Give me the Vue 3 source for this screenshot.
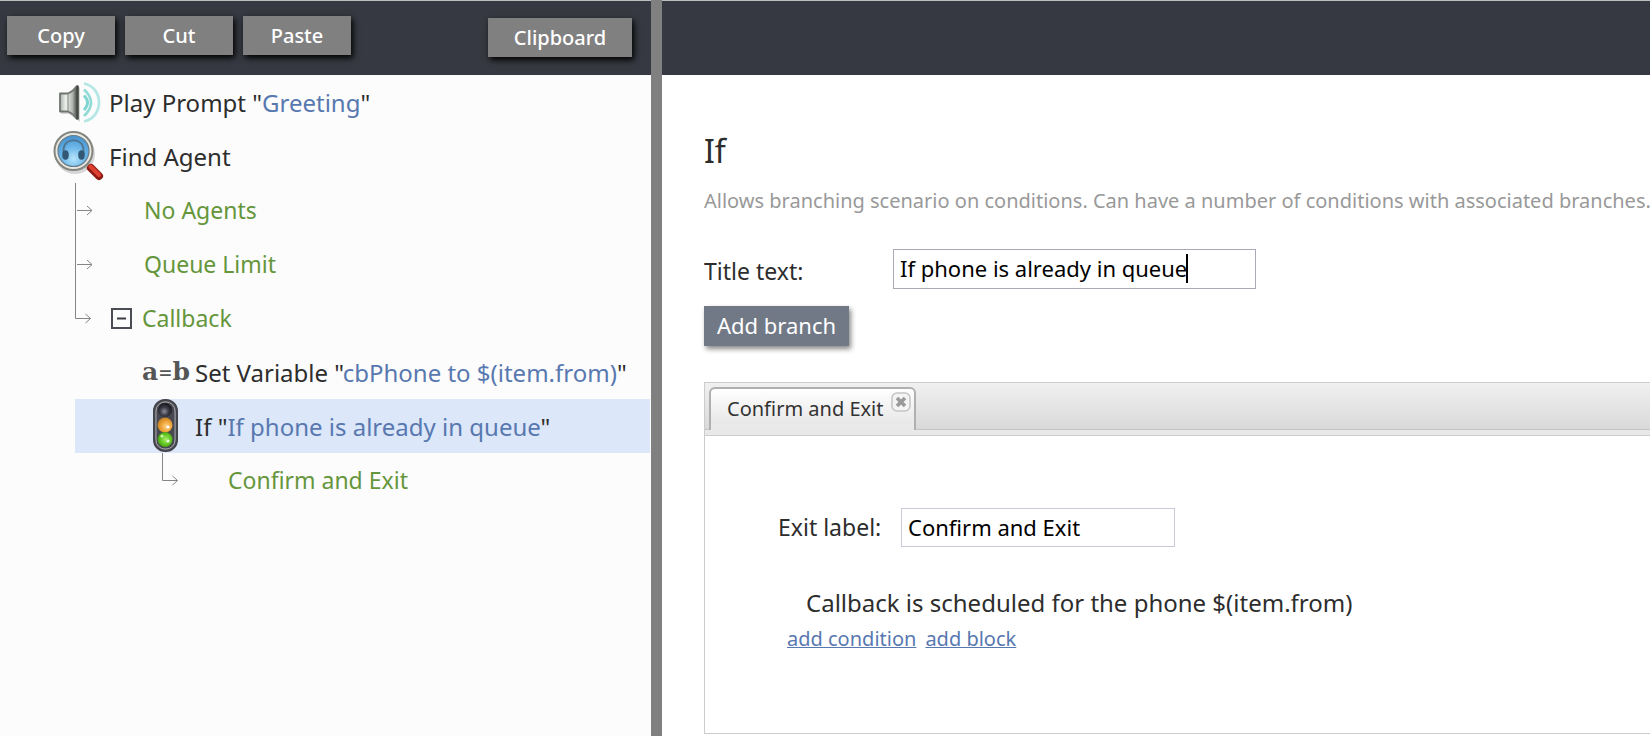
<script setup>
import { ref } from 'vue'

const title = ref('If phone is already in queue')
const exitLabel = ref('Confirm and Exit')
</script>

<template>
  <div class="editor">
    <section class="side">
      <header class="bar">
        <div class="edit-actions">
          <button type="button" class="tool">Copy</button>
          <button type="button" class="tool">Cut</button>
          <button type="button" class="tool">Paste</button>
        </div>
        <button type="button" class="tool wide">Clipboard</button>
      </header>

      <ul class="tree">
        <li class="row root">
          <span class="icon">
            <svg width="52" height="54" viewBox="0 0 52 54" aria-hidden="true">
              <defs>
                <linearGradient id="horn" x1="0" x2="1" y1="0" y2="0">
                  <stop offset="0" stop-color="#a9b0aa" />
                  <stop offset=".35" stop-color="#eef1ee" />
                  <stop offset=".75" stop-color="#b4b8b3" />
                  <stop offset="1" stop-color="#50534f" />
                </linearGradient>
              </defs>
              <path d="M9 20h8L28 12v35l-11-8H9z" fill="#000" opacity=".15" />
              <path d="M8 18.500h8q5-2 8.500-7v32q-3.500-5-8.500-7H8z" fill="url(#horn)" stroke="#70756f" stroke-width="1.800" stroke-linejoin="round" />
              <path d="M16 19v17" stroke="#858a84" stroke-width="1" />
              <path d="M25.500 11.500v32" stroke="#454944" stroke-width="2.600" stroke-linecap="round" />
              <g fill="none" stroke-width="2.800">
                <path d="M32 20.500q7 7 0 14.500" stroke="#7ed4d0" />
                <path d="M32 14.500q14 13 0 26.500" stroke="#92dbd7" />
                <path d="M32 8.500c20 4 20 34 0 38" stroke="#b5e7e4" />
              </g>
            </svg>
          </span>
          <span>Play Prompt "<b>Greeting</b>"</span>
        </li>
        <li class="row root">
          <span class="icon">
            <svg width="52" height="54" viewBox="0 0 52 54" aria-hidden="true">
              <defs>
                <radialGradient id="lens" cx=".5" cy=".75" r=".8">
                  <stop offset="0" stop-color="#b5e4fb" />
                  <stop offset=".5" stop-color="#69b5e8" />
                  <stop offset="1" stop-color="#3f8bcb" />
                </radialGradient>
              </defs>
              <circle cx="23" cy="25" r="20" fill="#000" opacity=".15" />
              <path d="M35 36l5 5" stroke="#bbb9b2" stroke-width="6" />
              <path d="M39 39l8 8" stroke="#8e1b12" stroke-width="8" stroke-linecap="round" />
              <path d="M38.500 37.500l8.500 8.500" stroke="#dd4030" stroke-width="4" stroke-linecap="round" />
              <circle cx="21.500" cy="22" r="19" fill="#e9e8e0" stroke="#83857f" stroke-width="2" />
              <circle cx="21.500" cy="22" r="15.500" fill="url(#lens)" stroke="#687d8b" stroke-width="1.200" />
              <path d="M11.500 25v-4c0-13 20-13 20 0v4" fill="none" stroke="#4d7594" stroke-width="1.800" />
              <ellipse cx="13.500" cy="26" rx="3.300" ry="4.800" fill="#335876" />
              <ellipse cx="29.500" cy="26" rx="3.300" ry="4.800" fill="#335876" />
            </svg>
          </span>
          <span>Find Agent</span>
        </li>
        <li class="row exit">
          <svg class="link" width="19" height="54" aria-hidden="true">
            <path d="M.5 0v54M2 27.500h15M12 23l5 4.500-5 4.500" />
          </svg>
          <span class="label">No Agents</span>
        </li>
        <li class="row exit">
          <svg class="link" width="19" height="54" aria-hidden="true">
            <path d="M.5 0v54M2 27.500h15M12 23l5 4.500-5 4.500" />
          </svg>
          <span class="label">Queue Limit</span>
        </li>
        <li class="row exit">
          <svg class="link" width="19" height="54" aria-hidden="true">
            <path d="M.5 0v27.500h15M10.500 23l5 4.500-5 4.500" />
          </svg>
          <button type="button" class="toggle" aria-label="Collapse Callback">
            <svg width="21" height="21" aria-hidden="true">
              <rect x="1" y="1" width="19" height="19" fill="#fcfcfc" stroke="#4b4d55" stroke-width="2" />
              <path d="M6 10.500h9" stroke="#3b3d45" stroke-width="2" />
            </svg>
          </button>
          <span>Callback</span>
        </li>
        <li class="row step">
          <span class="icon assign" aria-hidden="true">a<i>=</i>b</span>
          <span>Set Variable "<b>cbPhone to $(item.from)</b>"</span>
        </li>
        <li class="row step selected">
          <span class="icon">
            <svg width="26" height="54" viewBox="0 0 26 54" aria-hidden="true">
              <defs>
                <radialGradient id="dark" cx=".45" cy=".6" r=".6">
                  <stop offset="0" stop-color="#8a8a9c" />
                  <stop offset=".5" stop-color="#3c3c48" />
                  <stop offset="1" stop-color="#15151a" />
                </radialGradient>
                <radialGradient id="amber" cx=".6" cy=".6" r=".6">
                  <stop offset="0" stop-color="#ffd58a" />
                  <stop offset=".6" stop-color="#eda235" />
                  <stop offset="1" stop-color="#c98225" />
                </radialGradient>
                <radialGradient id="green" cx=".55" cy=".5" r=".6">
                  <stop offset="0" stop-color="#a8ee68" />
                  <stop offset=".6" stop-color="#5fc21f" />
                  <stop offset="1" stop-color="#3c8f14" />
                </radialGradient>
              </defs>
              <rect x="1" y="1" width="23" height="51" rx="11" fill="#63636b" stroke="#44444b" stroke-width="2" />
              <rect x="3" y="3" width="19" height="47" rx="9" fill="#484850" stroke="#a2a2aa" stroke-width="1" />
              <circle cx="12" cy="11" r="7" fill="url(#dark)" />
              <circle cx="12" cy="26" r="7.500" fill="url(#amber)" />
              <circle cx="12" cy="40.500" r="7.500" fill="url(#green)" />
              <circle cx="15" cy="28" r="1.600" fill="#fff" />
              <circle cx="15" cy="42" r="1.600" fill="#eaffdc" />
              <circle cx="9" cy="37" r="1.600" fill="#c9f6a4" />
            </svg>
          </span>
          <span>If "<b>If phone is already in queue</b>"</span>
        </li>
        <li class="row exit nested">
          <svg class="link" width="19" height="54" aria-hidden="true">
            <path d="M.5 0v27.500h15M10.500 23l5 4.500-5 4.500" />
          </svg>
          <span class="label">Confirm and Exit</span>
        </li>
      </ul>
    </section>

    <div class="splitter" role="separator" aria-orientation="vertical"></div>

    <main class="main">
      <div class="bar"></div>
      <div class="content">
        <h1>If</h1>
        <p class="about">Allows branching scenario on conditions. Can have a number of conditions with associated branches.</p>
        <div class="field">
          <label for="title-text">Title text:</label>
          <span class="entry">
            <input id="title-text" v-model="title" type="text" />
            <span class="caret"></span>
          </span>
        </div>
        <button type="button" class="add">Add branch</button>

        <section class="panel">
          <div class="tabs" role="tablist">
            <div class="tab">
              <button type="button" role="tab" aria-selected="true" class="tab-name">Confirm and Exit</button>
              <button type="button" class="close" aria-label="Close tab">
                <svg width="20" height="20" aria-hidden="true">
                  <rect x="1" y="1" width="18" height="18" rx="5" fill="#f4f4f4" stroke="#c3c3c3" stroke-width="1.500" />
                  <path d="M6 6l8 8M14 6l-8 8" stroke="#999" stroke-width="3.600" />
                </svg>
              </button>
            </div>
          </div>
          <div class="body">
            <div class="exit-field">
              <label for="exit-label">Exit label:</label>
              <input id="exit-label" v-model="exitLabel" type="text" />
            </div>
            <p class="condition">Callback is scheduled for the phone $(item.from)</p>
            <p class="links">
              <a href="#">add condition</a>
              <a href="#">add block</a>
            </p>
          </div>
        </section>
      </div>
    </main>
  </div>
</template>

<style>
body {
  margin: 0;
}
</style>

<style scoped>
.editor {
  display: grid;
  grid-template-columns: minmax(0, 651fr) 11px minmax(0, 988fr);
  min-height: 100vh;
  overflow: hidden;
  background: #fff;
  color: #2d2d2d;
  font-family: "Noto Sans", "Open Sans", sans-serif;
  font-size: 23px;
}
* {
  box-sizing: border-box;
}
button,
input {
  font-family: inherit;
}
button {
  padding: 0;
  border: 0;
  cursor: pointer;
}
.side {
  background: #fcfcfc;
}
.bar {
  display: flex;
  justify-content: space-between;
  align-items: center;
  height: 75px;
  padding: 0 19px 2px 7px;
  border-top: 1px solid #b9c0bd;
  background: #363941;
}
.edit-actions {
  display: flex;
  gap: 10px;
  align-self: flex-start;
  padding-top: 15px;
}
.tool {
  width: 108px;
  height: 39px;
  background: #808080;
  color: #fff;
  font-size: 20px;
  font-weight: 500;
  box-shadow: 2px 3px 6px #000;
}
.wide {
  width: 144px;
}
.tree {
  margin: 0;
  padding: 0 1px 0 0;
  list-style: none;
}
.row {
  display: flex;
  align-items: center;
  height: 54px;
  margin-left: 75px;
  font-size: 24px;
  white-space: nowrap;
}
.row b {
  color: #5878b0;
  font-weight: 400;
}
.root {
  margin-left: 52px;
}
.icon {
  display: flex;
  flex: none;
}
.root .icon {
  width: 57px;
}
.exit {
  color: #65963b;
  font-size: 23px;
}
.link {
  flex: none;
  fill: none;
  stroke: #85858a;
}
.exit .label {
  margin-left: 50px;
}
.toggle {
  display: flex;
  margin: 0 10px 0 17px;
  background: none;
}
.step {
  padding-left: 67px;
}
.step .icon {
  width: 53px;
}
.selected {
  background: #dce7f9;
}
.selected .icon {
  padding-left: 11px;
}
.assign {
  align-items: center;
  color: #555;
  font: bold 25px/40px "DejaVu Serif", serif;
}
.assign i {
  font: bold 17px/40px "DejaVu Serif", serif;
}
.nested {
  margin-left: 162px;
}
.nested .label {
  margin-left: 47px;
}
.splitter {
  background: #808080;
}
.content {
  padding: 54px 0 0 42px;
}
h1 {
  margin: 0;
  font-size: 32px;
  font-weight: 400;
  line-height: 44px;
}
.about {
  margin: 14px 0 0;
  color: #999;
  font-size: 20px;
  line-height: 28px;
  white-space: nowrap;
}
.field {
  display: flex;
  align-items: center;
  margin-top: 34px;
}
.field label {
  width: 189px;
  padding-top: 3px;
}
.entry {
  position: relative;
}
input {
  display: block;
  width: 363px;
  height: 40px;
  padding: 0 6px 2px;
  border: 1px solid #aaa9b8;
  outline: 0;
  background: #fff;
  color: #000;
  font-size: 22px;
}
.caret {
  position: absolute;
  top: 5px;
  left: 293px;
  width: 2px;
  height: 29px;
  background: #000;
}
.add {
  display: block;
  width: 145px;
  height: 40px;
  margin-top: 17px;
  padding-bottom: 3px;
  background: #727986;
  color: #fff;
  font-size: 22px;
  box-shadow: 2px 3px 5px #888;
}
.panel {
  margin-top: 36px;
  border: 1px solid #ccc;
  border-right: 0;
}
.tabs {
  height: 53px;
  padding: 4px 4px 0;
  border-bottom: 1px solid #ccc;
  background: linear-gradient(#f0f0f0, #d9d9d9 46px, #c4c4c4 46px, #c4c4c4 47px, #e8e8e8 47px);
}
.tab {
  display: flex;
  width: 207px;
  height: 43px;
  padding-left: 16px;
  border: 2px solid #b0b0b0;
  border-bottom: 0;
  border-radius: 6px 6px 0 0;
  background: linear-gradient(#fff, #e9e9e9 32px);
}
.tab-name {
  flex: 1;
  padding-bottom: 3px;
  background: none;
  color: #333;
  font-size: 20px;
  text-align: left;
  white-space: nowrap;
}
.close {
  display: flex;
  align-self: flex-start;
  margin: 3px 3px 0 0;
  background: none;
}
.body {
  height: 297px;
  padding: 72px 0 0 73px;
}
.exit-field {
  display: flex;
  align-items: center;
}
.exit-field label {
  width: 123px;
  padding-bottom: 2px;
}
.exit-field input {
  width: 274px;
  height: 39px;
  border-color: #c9c9d8;
}
.condition {
  margin: 39px 0 0 28px;
  font-size: 24px;
  line-height: 34px;
  white-space: nowrap;
}
.links {
  display: flex;
  gap: 9px;
  margin: 5px 0 0 9px;
  font-size: 20px;
  line-height: 28px;
}
.links a {
  color: #5878b0;
  text-decoration-thickness: 1px;
  text-underline-offset: 1px;
}
</style>
